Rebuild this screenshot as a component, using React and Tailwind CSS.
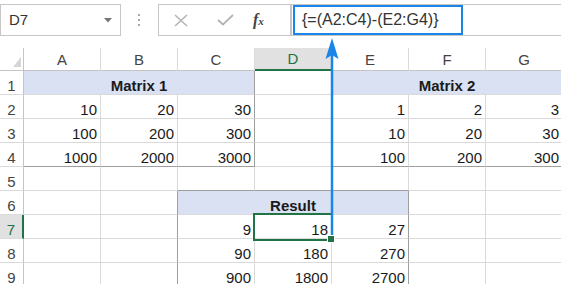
import React from 'react';
import clsx from 'clsx';

const COLS = ['A', 'B', 'C', 'D', 'E', 'F', 'G'];

// r = dark right edge, b = dark bottom edge, fill = blue header band
const ROWS = [
  [
    { v: 'Matrix 1', span: 3, r: 1, fill: 1, head: 1 },
    { r: 1 },
    { v: 'Matrix 2', span: 3, r: 1, fill: 1, head: 1 },
  ],
  [{ v: '10' }, { v: '20' }, { v: '30', r: 1 }, { r: 1 }, { v: '1' }, { v: '2' }, { v: '3', r: 1 }],
  [{ v: '100' }, { v: '200' }, { v: '300', r: 1 }, { r: 1 }, { v: '10' }, { v: '20' }, { v: '30', r: 1 }],
  [
    { v: '1000', b: 1 },
    { v: '2000', b: 1 },
    { v: '3000', r: 1, b: 1 },
    { r: 1 },
    { v: '100', b: 1 },
    { v: '200', b: 1 },
    { v: '300', r: 1, b: 1 },
  ],
  [{}, {}, { b: 1 }, { b: 1 }, { b: 1 }, {}, {}],
  [{}, { r: 1 }, { v: 'Result', span: 3, r: 1, fill: 1, head: 1 }, {}, {}],
  [{}, { r: 1 }, { v: '9' }, { v: '18' }, { v: '27', r: 1 }, {}, {}],
  [{}, { r: 1 }, { v: '90' }, { v: '180' }, { v: '270', r: 1 }, {}, {}],
  [{}, { r: 1 }, { v: '900', b: 1 }, { v: '1800', b: 1 }, { v: '2700', r: 1, b: 1 }, {}, {}],
];

const Cell = ({ cell }) => (
  <div
    className={clsx(
      'flex items-end pb-[1px] border-r border-b text-[15px] leading-none text-[#1a1a1a]',
      cell.span === 3 && 'col-span-3',
      cell.r ? 'border-r-[#9e9e9e]' : 'border-r-[#dadada]',
      cell.b ? 'border-b-[#9e9e9e]' : 'border-b-[#dadada]',
      cell.fill && 'bg-[#d9e1f2]',
      cell.head ? 'justify-center font-bold' : 'justify-end pr-[3px]'
    )}
  >
    {cell.v}
  </div>
);

const App = () => {
  return (
    <div className="relative h-[284px] w-[561px] overflow-hidden bg-white font-['Liberation_Sans',sans-serif]">
      {/* toolbar: name box + formula bar */}
      <div className="flex h-[48px] items-start pt-[4px]">
        <div className="flex h-[32px] w-[121px] items-center justify-between border border-[#c6c6c6] pl-[8px] pr-[8px] text-[15px] text-[#333]">
          <span>D7</span>
          <svg width="8" height="5" viewBox="0 0 8 5">
            <path d="M0 0 L8 0 L4 4.5 Z" fill="#777" />
          </svg>
        </div>
        <div className="flex h-[32px] w-[37px] flex-col items-center justify-center gap-[3px] pr-[2px]">
          <div className="h-[2px] w-[2px] bg-[#a8a8a8]" />
          <div className="h-[2px] w-[2px] bg-[#a8a8a8]" />
          <div className="h-[2px] w-[2px] bg-[#a8a8a8]" />
        </div>
        <div className="flex h-[32px] w-[133px] items-center border border-[#c6c6c6] pl-[15px]">
          <svg width="14" height="13" viewBox="0 0 14 13">
            <path d="M1 1 L13 12 M13 1 L1 12" stroke="#b4b4b4" strokeWidth="1.6" />
          </svg>
          <svg className="ml-[29px]" width="17" height="12" viewBox="0 0 17 12">
            <path d="M1 6 L6 10.5 L16 1" stroke="#b4b4b4" strokeWidth="1.8" fill="none" />
          </svg>
          <span className="ml-[19px] font-['Liberation_Serif',serif] text-[16px] font-bold italic text-[#444]">
            f<span className="text-[11px]">x</span>
          </span>
        </div>
        <div className="flex h-[32px] flex-1 border border-r-0 border-[#c6c6c6] pl-[1px]">
          <div className="flex w-[170px] items-center border-2 border-[#1a85e8] pl-[7px] text-[16px] text-[#333]">
            {'{=(A2:C4)-(E2:G4)}'}
          </div>
        </div>
      </div>

      {/* sheet */}
      <div className="grid grid-cols-[24px_repeat(7,77px)] grid-rows-[23px_repeat(9,24px)] text-[15px] leading-none">
        <div className="relative border-r border-b border-r-[#c4c4c4] border-b-[#c4c4c4]">
          <svg className="absolute left-0 top-0" width="24" height="23" viewBox="0 0 24 23">
            <path d="M13 19 L21 19 L21 9 Z" fill="#d6d6d6" />
          </svg>
        </div>
        {COLS.map((c) => (
          <div
            key={c}
            className={clsx(
              'flex items-center justify-center border-r border-r-[#dadada]',
              c === 'D'
                ? 'border-b-2 border-b-[#217346] bg-[#e1e1e1] text-[#217346]'
                : 'border-b border-b-[#c4c4c4] text-[#444]'
            )}
          >
            {c}
          </div>
        ))}
        {ROWS.map((row, i) => (
          <React.Fragment key={i}>
            <div
              className={clsx(
                'flex items-end justify-center border-b border-b-[#dadada] pb-[1px]',
                i === 6
                  ? 'border-r-2 border-r-[#217346] bg-[#e1e1e1] text-[#217346]'
                  : 'border-r border-r-[#c4c4c4] text-[#444]'
              )}
            >
              {i + 1}
            </div>
            {row.map((cell, j) => (
              <Cell key={j} cell={cell} />
            ))}
          </React.Fragment>
        ))}
      </div>

      {/* active cell D7 */}
      <div className="absolute left-[253px] top-[213px] h-[28px] w-[80px] border-2 border-[#217346]" />

      {/* arrow from formula bar down to D7 */}
      <svg className="pointer-events-none absolute left-0 top-0" width="561" height="284">
        <line x1="332" y1="52" x2="332" y2="238" stroke="#1a85e8" strokeWidth="2.5" />
        <path d="M332 38 L338.5 59 L332 55 L325.5 59 Z" fill="#1a85e8" />
      </svg>

      <div className="absolute left-[328px] top-[236px] h-[6px] w-[6px] bg-[#217346] outline outline-1 outline-white" />
    </div>
  );
};

export default App;
